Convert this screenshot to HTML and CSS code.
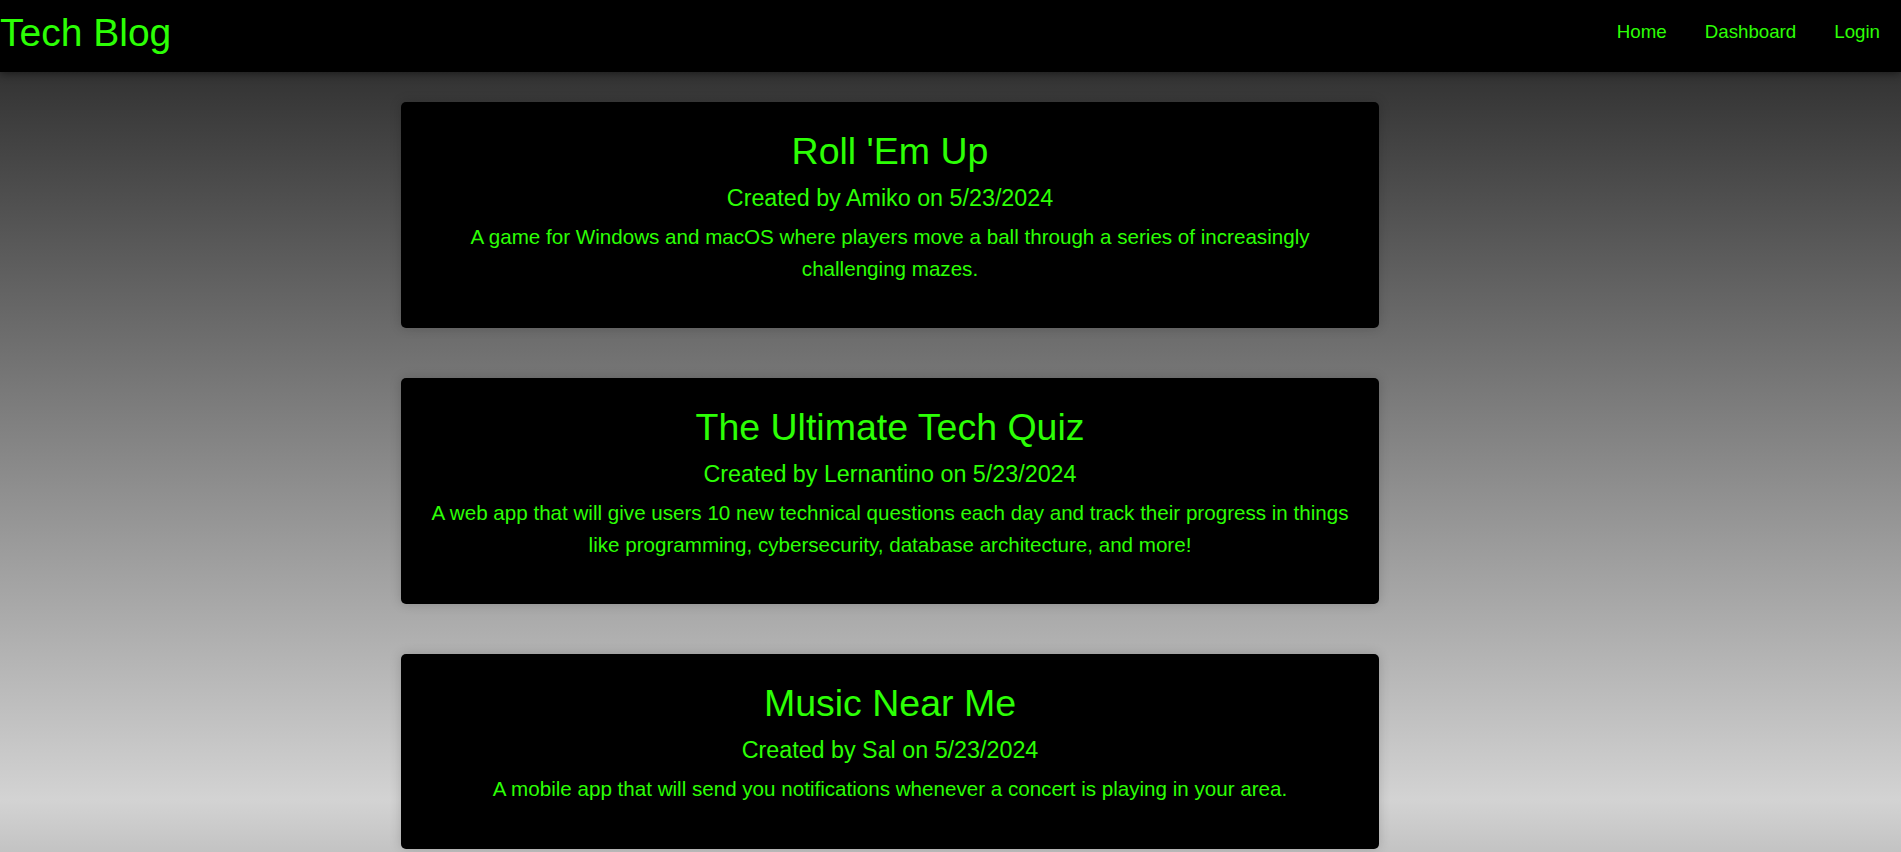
FILE: index.html
```html
<!DOCTYPE html>
<html lang="en">
<head>
<meta charset="utf-8">
<title>Tech Blog</title>
<link rel="stylesheet" href="styles.css">
</head>
<body>
<header class="site-header">
  <h1 class="brand">Tech Blog</h1>
  <nav class="nav">
    <a class="nav-link" href="#">Home</a>
    <a class="nav-link" href="#">Dashboard</a>
    <a class="nav-link" href="#">Login</a>
  </nav>
</header>
<main class="posts">
  <article class="post">
    <h2 class="post-title">Roll 'Em Up</h2>
    <p class="post-meta">Created by Amiko on 5/23/2024</p>
    <p class="post-body">A game for Windows and macOS where players move a ball through a series of increasingly challenging mazes.</p>
  </article>
  <article class="post">
    <h2 class="post-title">The Ultimate Tech Quiz</h2>
    <p class="post-meta">Created by Lernantino on 5/23/2024</p>
    <p class="post-body">A web app that will give users 10 new technical questions each day and track their progress in things like programming, cybersecurity, database architecture, and more!</p>
  </article>
  <article class="post">
    <h2 class="post-title">Music Near Me</h2>
    <p class="post-meta">Created by Sal on 5/23/2024</p>
    <p class="post-body">A mobile app that will send you notifications whenever a concert is playing in your area.</p>
  </article>
</main>
</body>
</html>
```
FILE: styles.css
```css
* { box-sizing: border-box; }

html, body {
  margin: 0;
  padding: 0;
}

body {
  height: 852px;
  overflow: hidden;
  font-family: "Liberation Sans", Arial, sans-serif;
  color: #2cff05;
  background: linear-gradient(to bottom, #333333 72px, #d3d3d3 800px, #c3c3c3 852px) no-repeat;
}

.site-header {
  position: relative;
  z-index: 1;
  height: 72px;
  background: #000;
  display: flex;
  align-items: center;
  justify-content: space-between;
  box-shadow: 0 2px 8px rgba(0, 0, 0, 0.45);
}

.brand {
  margin: 0;
  margin-top: -8px;
  font-size: 39px;
  font-weight: normal;
  line-height: 1;
}

.nav {
  display: flex;
  gap: 38px;
  padding-right: 21px;
  margin-top: -8px;
}

.nav-link {
  color: #2cff05;
  text-decoration: none;
  font-size: 18.72px;
}

.posts {
  display: flex;
  flex-direction: column;
  gap: 50px;
  padding-top: 30px;
  margin-left: 401px;
  width: 978px;
}

.post {
  background: #000;
  border-radius: 5px;
  padding: 29px 20px 44px;
  text-align: center;
  box-shadow: 0 0 12px rgba(0, 0, 0, 0.18);
}

.post-title {
  margin: 0;
  font-size: 37.5px;
  font-weight: normal;
  line-height: 40px;
}

.post-meta {
  margin: 13px 0 0;
  font-size: 23.3px;
  line-height: 28px;
}

.post-body {
  margin: 9px 0 0;
  font-size: 20.6px;
  line-height: 31.5px;
}
```
